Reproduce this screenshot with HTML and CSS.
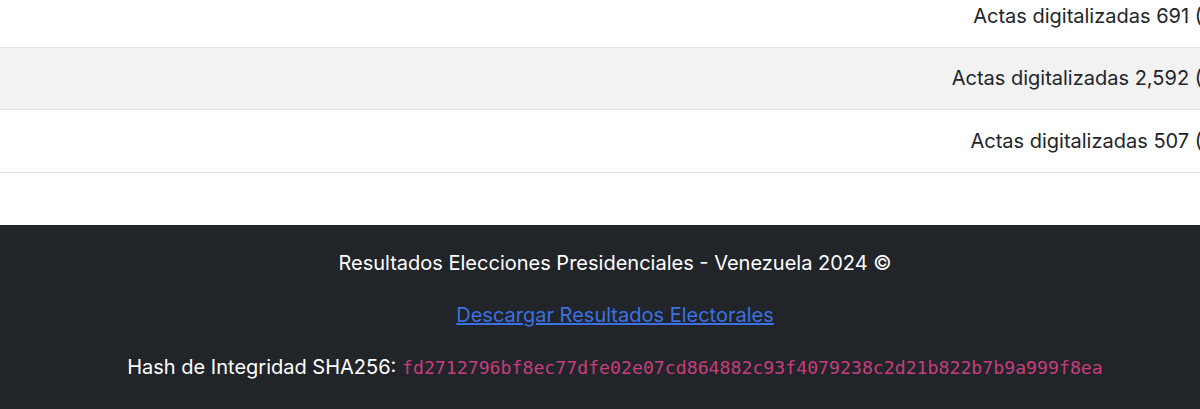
FILE: index.html
```html
<!DOCTYPE html>
<html lang="es">
<head>
  <meta charset="UTF-8">
  <title>Resultados Elecciones Presidenciales - Venezuela 2024</title>
  <link rel="stylesheet" href="styles.css">
</head>
<body>
  <div class="page">
    <div class="results">
      <table class="results-table">
        <tbody>
          <tr><td>Actas digitalizadas 691 (</td></tr>
          <tr><td>Actas digitalizadas 2,592 (</td></tr>
          <tr><td>Actas digitalizadas 507 (</td></tr>
        </tbody>
      </table>
    </div>

    <footer class="site-footer">
      <p>Resultados Elecciones Presidenciales - Venezuela 2024 &copy;</p>
      <p><a href="#">Descargar Resultados Electorales</a></p>
      <p>Hash de Integridad SHA256: <code>fd2712796bf8ec77dfe02e07cd864882c93f4079238c2d21b822b7b9a999f8ea</code></p>
    </footer>
  </div>
</body>
</html>
```

FILE: styles.css
```css
html, body {
  margin: 0;
  overflow: hidden;
}
body {
  font-family: Inter, "Liberation Sans", Arial, sans-serif;
  font-size: 20px;
  line-height: 30px;
  color: #212529;
  background: #fff;
}
.page {
  width: 1230px;
}
.results {
  margin-top: -15px;
  padding-bottom: 52px;
}
table.results-table {
  width: 100%;
  border-collapse: collapse;
}
table.results-table td {
  padding: 15.75px 28px 15.75px 8px;
  text-align: right;
  border-bottom: 1px solid #e2e3ea;
  white-space: nowrap;
}
table.results-table tr:nth-child(even) td {
  background: #f2f2f2;
}
.site-footer {
  background: #212529;
  color: #fff;
  text-align: center;
  padding: 23px 0 20px;
}
.site-footer p {
  margin: 0 0 22px;
}
.site-footer a {
  color: #3b71e3;
}
.site-footer code {
  font-family: "DejaVu Sans Mono", "Liberation Mono", monospace;
  font-size: 18.2px;
  color: #c73d7d;
}
```
